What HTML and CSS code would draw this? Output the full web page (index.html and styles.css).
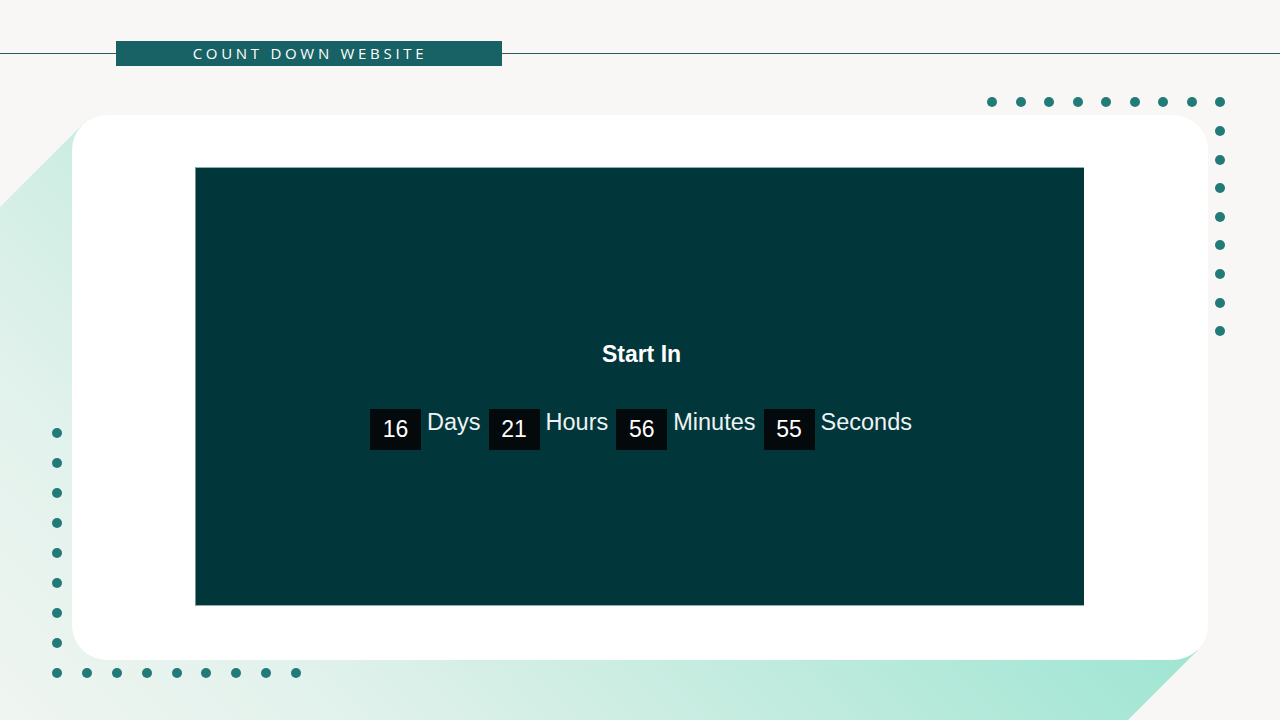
FILE: index.html
```html
<!DOCTYPE html>
<html lang="en">
<head>
<meta charset="utf-8">
<title>Count Down Website</title>
<link rel="stylesheet" href="styles.css">
</head>
<body>
<div class="page">
  <div class="mint"></div>

  <header class="topbar">
    <span class="rule rule-left"></span>
    <h1 class="title-bar">COUNT DOWN WEBSITE</h1>
    <span class="rule rule-right"></span>
  </header>

  <main class="card">
    <section class="panel">
      <h2 class="start">Start In</h2>
      <div class="countdown">
        <span class="num">16</span><span class="unit">Days</span>
        <span class="num">21</span><span class="unit">Hours</span>
        <span class="num">56</span><span class="unit">Minutes</span>
        <span class="num">55</span><span class="unit unit-last">Seconds</span>
      </div>
    </section>
  </main>

  <div class="dots dots-tr-row">
    <i></i><i></i><i></i><i></i><i></i><i></i><i></i><i></i><i></i>
  </div>
  <div class="dots dots-tr-col">
    <i></i><i></i><i></i><i></i><i></i><i></i><i></i><i></i>
  </div>
  <div class="dots dots-bl-col">
    <i></i><i></i><i></i><i></i><i></i><i></i><i></i><i></i>
  </div>
  <div class="dots dots-bl-row">
    <i></i><i></i><i></i><i></i><i></i><i></i><i></i><i></i><i></i>
  </div>
</div>
</body>
</html>
```

FILE: styles.css
```css
* { box-sizing: border-box; }

html, body {
  margin: 0;
  padding: 0;
}

body {
  background: #f8f7f5;
  font-family: "Liberation Sans", Arial, sans-serif;
}

.page {
  position: relative;
  width: 1280px;
  height: 720px;
  overflow: hidden;
  background: #f8f7f5;
}

.mint {
  position: absolute;
  inset: 0;
  background: linear-gradient(45deg, #f0f5f1 0%, #e2f2ec 17%, #d6efe6 26%, #a9e7d6 56%, #9de4d2 66%);
  clip-path: polygon(0 207px, 82px 125px, 600px 400px, 1198px 650px, 1128px 720px, 0 720px);
}

.topbar {
  position: relative;
  display: flex;
  align-items: center;
  height: 25px;
  margin-top: 41px;
}

.rule {
  height: 1px;
  background: #2b5a60;
}

.rule-left { width: 116px; flex: none; }
.rule-right { flex: 1; }

.title-bar {
  flex: none;
  width: 386px;
  height: 25px;
  margin: 0;
  background: #186164;
  color: #ffffff;
  font-family: "Open Sans", "Liberation Sans", sans-serif;
  font-weight: 400;
  font-size: 15px;
  letter-spacing: 3.7px;
  line-height: 25px;
  text-align: center;
  padding-left: 2px;
}

.card {
  position: relative;
  width: 1136px;
  height: 545px;
  margin: 49px 0 0 72px;
  background: #ffffff;
  border-radius: 35px;
  padding: 52px 124px 54px 123px;
}

.panel {
  height: 100%;
  background: #01363a;
  border-left: 1px solid #6f9294;
  border-top: 1px solid #8fb0b0;
  border-bottom: 1px solid #8fb0b0;
  display: flex;
  flex-direction: column;
  align-items: center;
  padding-top: 173px;
}

.start {
  margin: 0 0 0 3px;
  color: #ffffff;
  font-size: 23px;
  font-weight: 700;
  line-height: 26px;
}

.countdown {
  display: flex;
  align-items: flex-start;
  margin-top: 42px;
  margin-left: 2px;
  color: #eef3f3;
  font-size: 23px;
}

.num {
  width: 51px;
  height: 41px;
  line-height: 41px;
  text-align: center;
  background: #04090c;
  color: #ffffff;
}

.unit {
  font-size: 23.5px;
  line-height: 26px;
  margin: 0 8px 0 6px;
}

.unit-last { margin-right: 0; }

.dots {
  position: absolute;
  display: flex;
}

.dots i {
  display: block;
  width: 10px;
  height: 10px;
  border-radius: 50%;
  background: #227b78;
  flex: none;
}

.dots-tr-row {
  left: 987px;
  top: 97px;
  gap: 18.5px;
}

.dots-tr-col {
  left: 1215px;
  top: 126px;
  flex-direction: column;
  gap: 18.6px;
}

.dots-bl-col {
  left: 52px;
  top: 428px;
  flex-direction: column;
  gap: 20px;
}

.dots-bl-row {
  left: 52px;
  top: 668px;
  gap: 19.9px;
}
```
